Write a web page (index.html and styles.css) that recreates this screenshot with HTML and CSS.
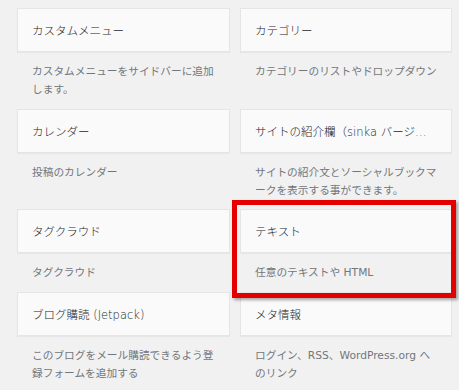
FILE: index.html
```html
<!DOCTYPE html>
<html>
<head>
<meta charset="UTF-8">
<meta name="viewport" content="width=device-width, initial-scale=1">
<link rel="stylesheet" href="styles.css">
</head>
<body>

<div class="widgets">

  <div class="widget">
    <div class="widget-top"><h3 class="widget-title">カスタムメニュー</h3></div>
    <div class="widget-description">カスタムメニューをサイドバーに追加します。</div>
  </div>

  <div class="widget">
    <div class="widget-top"><h3 class="widget-title">カテゴリー</h3></div>
    <div class="widget-description">カテゴリーのリストやドロップダウン</div>
  </div>

  <div class="widget">
    <div class="widget-top"><h3 class="widget-title">カレンダー</h3></div>
    <div class="widget-description">投稿のカレンダー</div>
  </div>

  <div class="widget">
    <div class="widget-top"><h3 class="widget-title">サイトの紹介欄（sinka バージ…</h3></div>
    <div class="widget-description">サイトの紹介文とソーシャルブックマークを表示する事ができます。</div>
  </div>

  <div class="widget">
    <div class="widget-top"><h3 class="widget-title">タグクラウド</h3></div>
    <div class="widget-description">タグクラウド</div>
  </div>

  <!-- highlighted one -->
  <div class="widget marked">
    <div class="widget-top"><h3 class="widget-title">テキスト</h3></div>
    <div class="widget-description">任意のテキストや HTML</div>
  </div>

  <div class="widget">
    <div class="widget-top"><h3 class="widget-title">ブログ購読 (Jetpack)</h3></div>
    <div class="widget-description">このブログをメール購読できるよう登録フォームを追加する</div>
  </div>

  <div class="widget">
    <div class="widget-top"><h3 class="widget-title">メタ情報</h3></div>
    <div class="widget-description">ログイン、RSS、WordPress.org へのリンク</div>
  </div>

</div>

</body>
</html>
```

FILE: styles.css
```css
body {
  margin: 0;
  background: #f1f1f1;
  font-family: "DejaVu Sans", "Noto Sans CJK JP", sans-serif;
}

.widgets {
  display: grid;
  grid-template-columns: 213px 212px;
  column-gap: 10px;
  padding: 8px 0 0 17px;
}

/* the white bar with the title */
.widget-top {
  height: 44px;
  box-sizing: border-box;
  border: 1px solid #e5e5e5;
  background: #fafafa;
  box-shadow: 0 1px 1px rgba(0,0,0,0.04);
  padding: 0 15px 0 14px;
  display: flex;
  align-items: center;
}

.widget-title {
  margin: 0;
  font-size: 11.5px;
  font-weight: 300;
  color: #23282d;
  white-space: nowrap;
  overflow: hidden;
}

.widget-description {
  padding: 11px 15px 9.5px 15px;
  font-size: 10.7px;
  line-height: 18px;
  color: #72777c;
}

/* red frame drawn over the widget */
.marked {
  position: relative;
}

.marked::after {
  content: "";
  position: absolute;
  left: -8px;
  top: -9px;
  right: -4px;
  bottom: -6px;
  border: 5px solid #e50000;
  box-shadow: 2px 2px 3px rgba(0,0,0,0.35);
}
```
